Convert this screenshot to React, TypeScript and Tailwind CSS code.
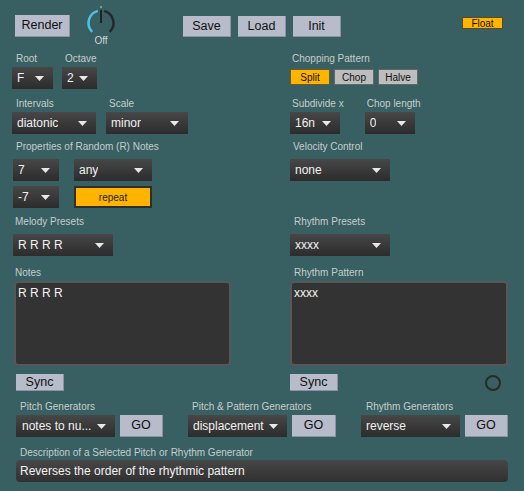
import React from "react";

const font = { fontFamily: '"Liberation Sans", Arial, sans-serif' };

const Label = ({ text, className = "" }: { text: string; className?: string }) => (
  <div className={`h-[14px] text-[10px] leading-[14px] text-[#c6cdcd] whitespace-nowrap ${className}`}>{text}</div>
);

const Menu = ({ value, className = "" }: { value: string; className?: string }) => (
  <div
    className={`h-[22px] flex items-center justify-between pl-[5px] pr-[9px] bg-gradient-to-b from-[#474747] to-[#2c2c2c] text-[12px] text-[#f2f2f2] ${className}`}
  >
    <span className="whitespace-nowrap overflow-hidden">{value}</span>
    <svg width="9" height="5" viewBox="0 0 9 5" className="shrink-0 ml-[4px]">
      <polygon points="0,0 9,0 4.5,5" fill="#e8e8e8" />
    </svg>
  </div>
);

const Btn = ({ text, className = "" }: { text: string; className?: string }) => (
  <div
    className={`flex items-center justify-center bg-[#b8bbca] text-[12.5px] text-[#111] border-r border-b border-[#8e93a3] ${className}`}
  >
    {text}
  </div>
);

const Knob = () => (
  <div className="flex flex-col items-center ml-[16px] -mt-[9px] w-[30px]">
    <svg width="30" height="30" viewBox="0 0 30 30">
      <path d="M 6.2 25.8 A 12.5 12.5 0 0 1 11.8 4.9" fill="none" stroke="#4cc3e4" strokeWidth="2.5" />
      <path d="M 18.2 4.9 A 12.5 12.5 0 0 1 23.8 25.8" fill="none" stroke="#1f2a2b" strokeWidth="2.5" />
      <line x1="15" y1="4" x2="15" y2="17" stroke="#1c2424" strokeWidth="2" />
      <circle cx="15" cy="1" r="0.8" fill="#e0e0e0" />
    </svg>
    <div className="text-[10px] leading-[10px] text-[#d0d6d6]">Off</div>
  </div>
);

const TextBox = ({ text, className = "" }: { text: string; className?: string }) => (
  <div
    className={`h-[85px] bg-[#333333] border-2 border-[#575757] rounded-[4px] px-[2px] pt-[2px] text-[12px] leading-[16px] text-[#f4f4f4] ${className}`}
  >
    {text}
  </div>
);

export default function App() {
  return (
    <div style={font} className="w-[524px] h-[491px] bg-[#385f61] overflow-hidden">
      {/* top bar */}
      <div className="h-[52px] flex items-start pt-[15px]">
        <Btn text="Render" className="ml-[15px] w-[55px] h-[22px]" />
        <Knob />
        <Btn text="Save" className="ml-[67px] mt-[1px] w-[48px] h-[21px]" />
        <Btn text="Load" className="ml-[7px] mt-[1px] w-[48px] h-[21px]" />
        <Btn text="Init" className="ml-[7px] mt-[1px] w-[48px] h-[21px]" />
        <div className="ml-[121px] mt-[2px] w-[41px] h-[12px] bg-[#ffb400] border border-[#5a4a20] flex items-center justify-center text-[10px] text-[#111]">
          Float
        </div>
      </div>

      <div className="pl-[12px]">
        {/* row 1 */}
        <div className="flex">
          <div className="w-[278px] flex gap-[9px]">
            <div className="flex flex-col">
              <Label text="Root" className="pl-[4px]" />
              <Menu value="F" className="mt-[1px] w-[41px]" />
            </div>
            <div className="flex flex-col">
              <Label text="Octave" className="pl-[3px]" />
              <Menu value="2" className="mt-[1px] w-[35px] pr-[6px]" />
            </div>
          </div>
          <div className="flex flex-col">
            <Label text="Chopping Pattern" className="pl-[2px]" />
            <div className="mt-[3px] flex gap-[4px]">
              <div className="w-[40px] h-[16px] bg-[#ffb400] border border-[#6a5a30] flex items-center justify-center text-[10px] text-[#111]">Split</div>
              <div className="w-[40px] h-[16px] bg-[#bdbdbd] border border-[#666] flex items-center justify-center text-[10px] text-[#111]">Chop</div>
              <div className="w-[40px] h-[16px] bg-[#bdbdbd] border border-[#666] flex items-center justify-center text-[10px] text-[#111]">Halve</div>
            </div>
          </div>
        </div>

        {/* row 2 */}
        <div className="flex mt-[8px]">
          <div className="w-[278px] flex gap-[10px]">
            <div className="flex flex-col">
              <Label text="Intervals" className="pl-[4px]" />
              <Menu value="diatonic" className="mt-[1px] w-[84px]" />
            </div>
            <div className="flex flex-col">
              <Label text="Scale" className="pl-[3px]" />
              <Menu value="minor" className="mt-[1px] w-[82px]" />
            </div>
          </div>
          <div className="flex gap-[21px]">
            <div className="flex flex-col">
              <Label text="Subdivide x" className="pl-[2px]" />
              <Menu value="16n" className="mt-[1px] w-[50px] pr-[7px]" />
            </div>
            <div className="flex flex-col">
              <Label text="Chop length" className="pl-[2px]" />
              <Menu value="0" className="mt-[1px] w-[50px] pr-[7px]" />
            </div>
          </div>
        </div>

        {/* row 3 */}
        <div className="flex mt-[6px]">
          <div className="w-[278px] flex flex-col">
            <Label text="Properties of Random (R) Notes" className="pl-[4px]" />
            <div className="mt-[5px] flex gap-[15px]">
              <Menu value="7" className="ml-[1px] w-[46px]" />
              <Menu value="any" className="w-[78px]" />
            </div>
            <div className="mt-[5px] flex gap-[15px]">
              <Menu value="-7" className="ml-[1px] w-[46px]" />
              <div className="w-[78px] h-[22px] bg-[#ffb400] border-2 border-[#2e2e2e] flex items-center justify-center text-[10px] text-[#222]">
                repeat
              </div>
            </div>
          </div>
          <div className="flex flex-col">
            <Label text="Velocity Control" className="pl-[3px]" />
            <Menu value="none" className="mt-[5px] w-[100px]" />
          </div>
        </div>

        {/* row 4 */}
        <div className="flex mt-[7px]">
          <div className="w-[278px] flex flex-col">
            <Label text="Melody Presets" className="pl-[3px]" />
            <Menu value="R R R R" className="mt-[5px] ml-[1px] w-[100px]" />
          </div>
          <div className="flex flex-col">
            <Label text="Rhythm Presets" className="pl-[4px]" />
            <Menu value="xxxx" className="mt-[5px] w-[100px]" />
          </div>
        </div>

        {/* row 5 */}
        <div className="flex mt-[10px]">
          <div className="w-[278px] flex flex-col">
            <Label text="Notes" className="pl-[3px]" />
            <TextBox text="R R R R" className="mt-[1px] ml-[2px] w-[217px]" />
          </div>
          <div className="flex flex-col">
            <Label text="Rhythm Pattern" className="pl-[4px]" />
            <TextBox text="xxxx" className="mt-[1px] w-[218px]" />
          </div>
        </div>

        {/* row 6 */}
        <div className="flex mt-[8px] items-center">
          <div className="w-[278px]">
            <Btn text="Sync" className="ml-[4px] w-[48px] h-[17px]" />
          </div>
          <Btn text="Sync" className="w-[48px] h-[17px]" />
          <div className="ml-[147px] w-[16px] h-[16px] rounded-full border-2 border-[#2a2a2a]" />
        </div>
      </div>

      {/* generators */}
      <div className="pl-[16px] mt-[9px] flex gap-[25px]">
        <div className="flex flex-col">
          <Label text="Pitch Generators" className="pl-[4px]" />
          <div className="mt-[1px] flex gap-[5px]">
            <Menu value="notes to nu..." className="w-[99px] pl-[6px]" />
            <Btn text="GO" className="w-[43px] h-[22px]" />
          </div>
        </div>
        <div className="flex flex-col">
          <Label text="Pitch & Pattern Generators" className="pl-[4px]" />
          <div className="mt-[1px] flex gap-[5px]">
            <Menu value="displacement" className="w-[99px] pr-[5px]" />
            <Btn text="GO" className="w-[44px] h-[22px]" />
          </div>
        </div>
        <div className="flex flex-col">
          <Label text="Rhythm Generators" className="pl-[5px]" />
          <div className="mt-[1px] flex gap-[5px]">
            <Menu value="reverse" className="w-[99px]" />
            <Btn text="GO" className="w-[43px] h-[22px]" />
          </div>
        </div>
      </div>

      <div className="pl-[16px] mt-[9px] flex flex-col">
        <Label text="Description of a Selected Pitch or Rhythm Generator" className="pl-[4px]" />
        <div className="w-[492px] h-[22px] rounded-[4px] bg-gradient-to-b from-[#474747] to-[#303030] flex items-center pl-[4px] text-[12px] text-[#f2f2f2]">
          Reverses the order of the rhythmic pattern
        </div>
      </div>
    </div>
  );
}
